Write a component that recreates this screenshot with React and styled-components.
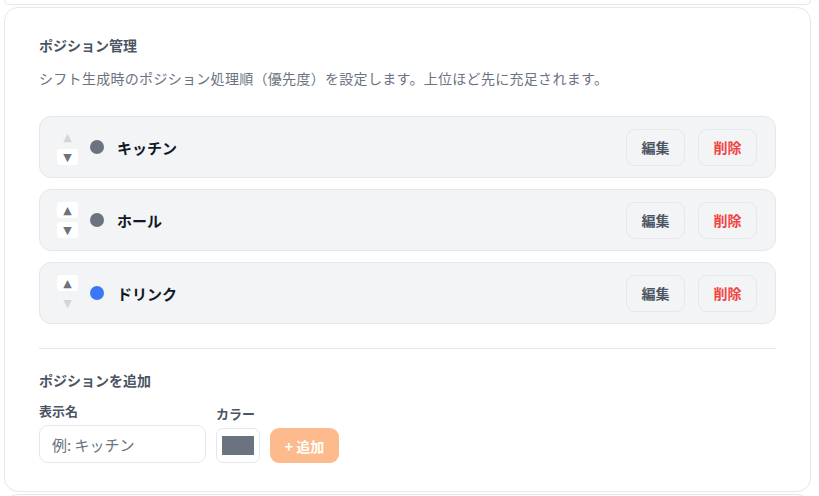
import React from "react";
import styled, { createGlobalStyle } from "styled-components";

const Global = createGlobalStyle`
  html, body { margin: 0; padding: 0; background: #ffffff; }
  body { font-family: "Noto Sans CJK JP", "Noto Sans", sans-serif; }
  * { box-sizing: border-box; }
`;

const Page = styled.div`
  width: 819px;
  height: 496px;
  overflow: hidden;
  padding: 0 8px 0 4px;
  display: flex;
  flex-direction: column;
  gap: 2px;
`;

const PrevCard = styled.div`
  height: 5px;
  flex: none;
  border: 1px solid #e5e7eb;
  border-top: none;
  border-radius: 0 0 14px 14px;
`;

const Card = styled.section`
  flex: none;
  border: 1px solid #e5e7eb;
  border-radius: 14px;
  padding: 27px 34px 28px;
  background: #fff;
`;

const NextCard = styled.div`
  height: 20px;
  flex: none;
  border: 1px solid #e5e7eb;
  border-radius: 14px 14px 0 0;
`;

const Title = styled.h2`
  margin: 0;
  font-size: 14px;
  line-height: 20px;
  font-weight: 700;
  color: #4b5563;
`;

const Desc = styled.p`
  margin: 13px 0 28px;
  font-size: 14px;
  line-height: 20px;
  letter-spacing: 0.3px;
  color: #6b7280;
`;

const List = styled.div`
  display: flex;
  flex-direction: column;
  gap: 11px;
`;

const Row = styled.div`
  height: 62px;
  display: flex;
  align-items: center;
  padding: 0 18px 0 17px;
  background: #f3f4f6;
  border: 1px solid #e5e7eb;
  border-radius: 12px;
`;

const Arrows = styled.div`
  display: flex;
  flex-direction: column;
  gap: 4px;
  margin-right: 12px;
`;

const ArrowBtn = styled.button`
  width: 21px;
  height: 16px;
  padding: 0;
  border: none;
  border-radius: 3px;
  background: ${(p) => (p.disabled ? "transparent" : "#ffffff")};
  color: ${(p) => (p.disabled ? "#d1d5db" : "#6b7280")};
  display: flex;
  align-items: center;
  justify-content: center;
  font-size: 11px;
  line-height: 1;
  font-family: "DejaVu Sans", sans-serif;
`;

const Dot = styled.span`
  width: 14px;
  height: 14px;
  border-radius: 50%;
  background: ${(p) => p.color};
  flex: none;
  margin-right: 13px;
`;

const Name = styled.span`
  flex: 1;
  font-size: 15px;
  font-weight: 700;
  color: #111827;
`;

const Actions = styled.div`
  display: flex;
  gap: 13px;
`;

const ActionBtn = styled.button`
  width: 59px;
  height: 37px;
  border: 1px solid #e5e7eb;
  border-radius: 9px;
  background: #f3f4f6;
  font-family: inherit;
  font-size: 14px;
  font-weight: 700;
  color: ${(p) => (p.danger ? "#ef4444" : "#4b5563")};
  padding: 0;
`;

const Divider = styled.hr`
  margin: 24px 0 0;
  border: none;
  border-top: 1px solid #e5e7eb;
`;

const SubTitle = styled.h3`
  margin: 21px 0 13px;
  font-size: 14px;
  line-height: 20px;
  font-weight: 700;
  color: #4b5563;
`;

const Form = styled.div`
  display: flex;
  align-items: flex-end;
  gap: 10px;
`;

const Field = styled.label`
  display: flex;
  flex-direction: column;
  gap: 6px;
`;

const Label = styled.span`
  font-size: 13px;
  line-height: 16px;
  font-weight: 700;
  color: #4b5563;
`;

const TextInput = styled.input`
  width: 167px;
  height: 38px;
  border: 1px solid #e5e7eb;
  border-radius: 9px;
  padding: 0 12px;
  font-family: inherit;
  font-size: 15px;
  color: #111827;
  outline: none;
  &::placeholder { color: #6b7280; }
`;

const ColorBox = styled.div`
  width: 44px;
  height: 35px;
  border: 1px solid #e5e7eb;
  border-radius: 7px;
  display: flex;
  align-items: center;
  justify-content: center;
  background: #fff;
`;

const Swatch = styled.span`
  width: 32px;
  height: 19px;
  background: ${(p) => p.color};
`;

const AddBtn = styled.button`
  width: 69px;
  height: 35px;
  border: none;
  border-radius: 9px;
  background: #fdba8c;
  color: #ffffff;
  font-family: inherit;
  font-size: 14px;
  font-weight: 700;
  padding: 0;
`;

const positions = [
  { name: "キッチン", color: "#6b7280" },
  { name: "ホール", color: "#6b7280" },
  { name: "ドリンク", color: "#3b76f6" },
];

export default function App() {
  return (
    <>
      <Global />
      <Page>
        <PrevCard />
        <Card>
          <Title>ポジション管理</Title>
          <Desc>シフト生成時のポジション処理順（優先度）を設定します。上位ほど先に充足されます。</Desc>
          <List>
            {positions.map((p, i) => (
              <Row key={p.name}>
                <Arrows>
                  <ArrowBtn disabled={i === 0}>▲</ArrowBtn>
                  <ArrowBtn disabled={i === positions.length - 1}>▼</ArrowBtn>
                </Arrows>
                <Dot color={p.color} />
                <Name>{p.name}</Name>
                <Actions>
                  <ActionBtn>編集</ActionBtn>
                  <ActionBtn danger>削除</ActionBtn>
                </Actions>
              </Row>
            ))}
          </List>
          <Divider />
          <SubTitle>ポジションを追加</SubTitle>
          <Form>
            <Field>
              <Label>表示名</Label>
              <TextInput placeholder="例: キッチン" />
            </Field>
            <Field>
              <Label>カラー</Label>
              <ColorBox>
                <Swatch color="#6b7280" />
              </ColorBox>
            </Field>
            <AddBtn>+ 追加</AddBtn>
          </Form>
        </Card>
        <NextCard />
      </Page>
    </>
  );
}
